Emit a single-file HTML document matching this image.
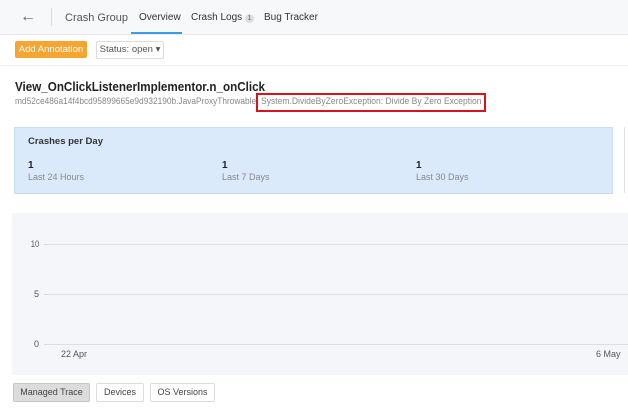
<!DOCTYPE html><html><head><style>
body{margin:0;width:628px;height:411px;overflow:hidden;background:#fff;font-family:"Liberation Sans",sans-serif;position:relative}
.a{position:absolute;white-space:nowrap}
.s{transform-origin:0 0}
</style></head><body>
<div class="a" style="left:0;top:0;width:628px;height:34px;background:#f7f8fa;border-bottom:1px solid #e6e8eb"></div>
<div class="a" style="left:20px;top:8px;font-size:16px;color:#666">&#8592;</div>
<div class="a" style="left:51px;top:8px;width:1px;height:18px;background:#ddd"></div>
<div class="a" style="left:65px;top:12px;font-size:11px;color:#555">Crash Group</div>
<div class="a" style="left:139px;top:12px;font-size:10px;color:#333">Overview</div>
<div class="a" style="left:131px;top:32px;width:51px;height:2px;background:#3b9ddd"></div>
<div class="a" style="left:191px;top:12px;font-size:10px;color:#333">Crash Logs <span style="display:inline-block;width:9px;height:9px;border-radius:5px;background:#ddd;font-size:7px;text-align:center;line-height:9px;color:#666">1</span></div>
<div class="a" style="left:264px;top:12px;font-size:10px;color:#333">Bug Tracker</div>
<div class="a" style="left:15px;top:41px;width:72px;height:17px;background:#f6a531;border-radius:2px;color:#fff;font-size:9.5px;line-height:17px;text-align:center">Add Annotation</div>
<div class="a" style="left:96px;top:41px;width:66px;height:16px;border:1px solid #ddd;border-radius:2px;color:#555;font-size:9.5px;line-height:16px;text-align:center">Status: open ▾</div>
<div class="a" style="left:0;top:65px;width:628px;height:1px;background:#eee"></div>
<div class="a s" style="left:15px;top:79px;font-size:13px;font-weight:bold;color:#222;transform:scaleX(.895)">View_OnClickListenerImplementor.n_onClick</div>
<div class="a s" style="left:15px;top:96px;font-size:9px;color:#888;transform:scaleX(.925)">md52ce486a14f4bcd95899665e9d932190b.JavaProxyThrowable</div>
<div class="a" style="left:256px;top:93px;width:226px;height:15px;border:2px solid #d7141e"></div>
<div class="a s" style="left:261px;top:96px;font-size:9px;color:#888;transform:scaleX(.95)">System.DivideByZeroException: Divide By Zero Exception</div>
<div class="a" style="left:14px;top:127px;width:597px;height:65px;background:#dbeafb;border:1px solid #c8dcf2"></div>
<div class="a" style="left:624px;top:127px;width:1px;height:66px;background:#ddd"></div>
<div class="a" style="left:28px;top:136px;font-size:9.5px;font-weight:bold;color:#333">Crashes per Day</div>
<div class="a" style="left:28px;top:160px;font-size:10px;font-weight:bold;color:#222">1</div>
<div class="a" style="left:28px;top:172px;font-size:9px;color:#888">Last 24 Hours</div>
<div class="a" style="left:222px;top:160px;font-size:10px;font-weight:bold;color:#222">1</div>
<div class="a" style="left:222px;top:172px;font-size:9px;color:#888">Last 7 Days</div>
<div class="a" style="left:416px;top:160px;font-size:10px;font-weight:bold;color:#222">1</div>
<div class="a" style="left:416px;top:172px;font-size:9px;color:#888">Last 30 Days</div>
<div class="a" style="left:12px;top:213px;width:616px;height:162px;background:#f5f6f9"></div>
<div class="a" style="left:44px;top:244px;width:584px;height:1px;background:#dcdee2"></div>
<div class="a" style="left:44px;top:294px;width:584px;height:1px;background:#dcdee2"></div>
<div class="a" style="left:44px;top:344px;width:584px;height:1px;background:#dcdee2"></div>
<div class="a" style="left:30px;top:239px;font-size:9px;color:#555;transform:scaleX(.85)">10</div>
<div class="a" style="left:34px;top:289px;font-size:9px;color:#555">5</div>
<div class="a" style="left:34px;top:339px;font-size:9px;color:#555">0</div>
<div class="a" style="left:61px;top:349px;font-size:9px;color:#555">22 Apr</div>
<div class="a" style="left:596px;top:349px;font-size:9px;color:#555">6 May</div>
<div class="a" style="left:13px;top:383px;width:75px;height:17px;background:#dcdcdc;border:1px solid #c6c6c6;border-radius:2px;font-size:9px;line-height:17px;text-align:center;color:#444">Managed Trace</div>
<div class="a" style="left:96px;top:383px;width:46px;height:17px;border:1px solid #ddd;border-radius:2px;font-size:9px;line-height:17px;text-align:center;color:#444">Devices</div>
<div class="a" style="left:150px;top:383px;width:63px;height:17px;border:1px solid #ddd;border-radius:2px;font-size:9px;line-height:17px;text-align:center;color:#444">OS Versions</div>
</body></html>
